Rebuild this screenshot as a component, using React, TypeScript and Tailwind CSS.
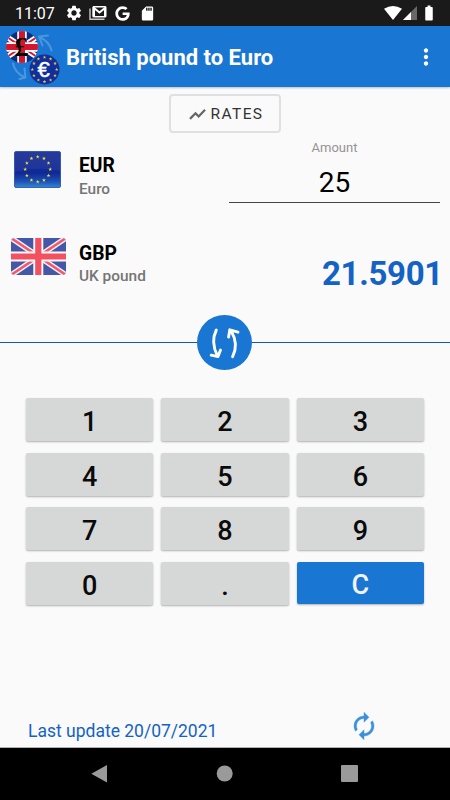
import React, { useState } from 'react';
import { MdSettings, MdSdCard, MdBatteryFull, MdMoreVert } from 'react-icons/md';
import { FaGoogle } from 'react-icons/fa';

const RATE = 0.863604;
const KEYS = ['1', '2', '3', '4', '5', '6', '7', '8', '9', '0', '.', 'C'];

const STAR = '0,-1 0.24,-0.32 0.95,-0.31 0.38,0.12 0.59,0.81 0,0.4 -0.59,0.81 -0.38,0.12 -0.95,-0.31 -0.24,-0.32';

function Stars({ cx, cy, r, size, fill }: { cx: number; cy: number; r: number; size: number; fill: string }) {
  return (
    <g fill={fill}>
      {Array.from({ length: 12 }, (_, i) => {
        const a = (i * Math.PI) / 6;
        return (
          <polygon
            key={i}
            points={STAR}
            transform={`translate(${cx + r * Math.sin(a)} ${cy - r * Math.cos(a)}) scale(${size})`}
          />
        );
      })}
    </g>
  );
}

function AppLogo() {
  return (
    <svg className="h-[60px] w-[62px] shrink-0" viewBox="0 26 62 60">
      <defs>
        <clipPath id="coin">
          <circle cx="22" cy="46" r="16" />
        </clipPath>
      </defs>
      <g clipPath="url(#coin)">
        <rect x="6" y="30" width="32" height="32" fill="#0b2d7c" />
        <path d="M4 34 40 58M4 58 40 34" stroke="#fff" strokeWidth="5.5" />
        <path d="M4 34 40 58M4 58 40 34" stroke="#d4152e" strokeWidth="2" />
        <path d="M22 30v32M6 46h32" stroke="#fff" strokeWidth="9.5" />
        <path d="M22 30v32M6 46h32" stroke="#d4152e" strokeWidth="6" />
      </g>
      <text x="21.5" y="55" textAnchor="middle" className="font-['Liberation_Serif',serif] text-[28px] font-bold">£</text>
      <g fill="none" stroke="#4b97de" strokeWidth="2" strokeLinecap="round" strokeLinejoin="round">
        <path d="M51.500 49.500Q49 40 39.500 36M48 34.500l-9 1 3.500 9" />
        <path d="M13 62.500Q15 72 24.500 76M19.500 78l6-1.500-1-9" />
      </g>
      <circle cx="44.500" cy="68.500" r="15" fill="#0f2f9e" />
      <Stars cx={44.5} cy={68.5} r={12.2} size={1.9} fill="#f5c32c" />
      <text
        x="43.500"
        y="76"
        textAnchor="middle"
        fill="#fff"
        stroke="#fff"
        strokeWidth="0.500"
        className="font-['Liberation_Sans',sans-serif] text-[22px]"
      >
        €
      </text>
    </svg>
  );
}

function EuFlag() {
  return (
    <svg className="h-[37px] w-[47px]" viewBox="0 0 47 37">
      <defs>
        <linearGradient id="eu" x1="0" y1="0" x2="0" y2="1">
          <stop offset="0" stopColor="#16309a" />
          <stop offset="0.12" stopColor="#1b2f95" />
          <stop offset="0.6" stopColor="#102996" />
          <stop offset="0.82" stopColor="#1c4fb2" />
          <stop offset="1" stopColor="#3087d5" />
        </linearGradient>
      </defs>
      <rect x="0.500" y="0.500" width="46" height="36" rx="1.500" fill="url(#eu)" stroke="#27479f" strokeWidth="0.800" />
      <path d="M1 1h45v19Q24 15 1 21z" fill="#fff" fillOpacity="0.050" />
      <Stars cx={23.7} cy={18.3} r={12.5} size={2} fill="#efe63c" />
    </svg>
  );
}

function UkFlag() {
  return (
    <svg className="h-[37px] w-[55px]" viewBox="0 0 55 37">
      <defs>
        <clipPath id="uk">
          <rect width="55" height="37" rx="4" />
        </clipPath>
      </defs>
      <g clipPath="url(#uk)">
        <rect width="55" height="37" fill="#4558a8" />
        <path d="M0 0 55 37M0 37 55 0" stroke="#f0f1f8" strokeWidth="5.500" />
        <path d="M0 0 55 37M0 37 55 0" stroke="#f35968" strokeWidth="2.600" />
        <path d="M27.300 0v37M0 18.500h55" stroke="#fafafa" strokeWidth="10" />
        <path d="M27.300 0v37M0 18.500h55" stroke="#f35060" strokeWidth="6.200" />
      </g>
    </svg>
  );
}

function StatusBar() {
  return (
    <div className="flex h-[26px] items-center bg-[#1a1a1a] pl-[15px] pr-[12px] text-white">
      <span className="w-[50px] pt-[2px] text-[16px] leading-none">11:07</span>
      <MdSettings className="size-[18px]" />
      <svg className="ml-[6px] h-[14px] w-[18px]" viewBox="0 0 18 14">
        <path d="M1 2.500v10.700h14.500" fill="none" stroke="#c9c9c9" strokeWidth="1.400" />
        <rect x="4" y="0.800" width="12.800" height="10" rx="0.800" fill="none" stroke="#fff" strokeWidth="1.400" />
        <path d="M5 10.500V2l5.500 4.500L16 2v8.500" fill="none" stroke="#fff" strokeWidth="2" />
      </svg>
      <FaGoogle className="ml-[8px] h-[15px] w-[15px]" />
      <MdSdCard className="ml-[9px] size-[17px]" />
      <svg className="ml-auto h-[14px] w-[18px]" viewBox="0 0 18 14">
        <path d="M0 2.800Q9-2.800 18 2.800L9 14z" fill="#fff" />
      </svg>
      <svg className="ml-[1px] h-[14px] w-[14px]" viewBox="0 0 14 14">
        <path d="M14 0v14H0z" fill="#686868" />
        <path d="M8 6v8H0z" fill="#fff" />
      </svg>
      <MdBatteryFull className="ml-[3px] size-[18px]" />
    </div>
  );
}

export default function App() {
  const [amount, setAmount] = useState('25');

  const handleKey = (key: string) => {
    if (key === 'C') {
      setAmount('');
    } else if (key !== '.' || !amount.includes('.')) {
      setAmount(prev => prev + key);
    }
  };

  const result = (Number(amount || 0) * RATE).toFixed(4);

  return (
    <div className="flex h-[800px] w-[450px] flex-col overflow-hidden bg-[#fafafa] font-[Roboto,sans-serif]">
      <StatusBar />

      {/* App bar */}
      <header className="flex h-[61px] shrink-0 items-center bg-[#1976d2] text-white shadow-[0_1px_2px_rgba(0,0,0,0.25)]">
        <AppLogo />
        <h1 className="ml-[4px] mt-[2px] whitespace-nowrap text-[22px] font-bold leading-none">British pound to Euro</h1>
        <button className="ml-auto mr-[11px]">
          <MdMoreVert className="size-[26px]" />
        </button>
      </header>

      <div className="flex h-[46px] justify-center pt-[7px]">
        <button className="flex h-[39px] w-[112px] items-center justify-center gap-[4px] rounded-[4px] border-2 border-[#e0e0e0] pl-[1px] pt-[2px] text-[15.500px] tracking-[1.400px] text-[#333]">
          <svg className="size-[19px]" viewBox="0 0 24 24" fill="none" stroke="#666" strokeWidth="2.800">
            <path d="M2.500 17.500l7-7 4 4 8-8.500" />
          </svg>
          RATES
        </button>
      </div>

      {/* Source currency */}
      <div className="flex h-[89px] pl-[14px] pr-[10px]">
        <div className="mt-[18px] w-[65px]">
          <EuFlag />
        </div>
        <div className="mt-[23px]">
          <p className="text-[19.300px] font-bold leading-[20px] text-black">EUR</p>
          <p className="mt-[4px] text-[15.400px] font-medium leading-[18px] text-[#757575]">Euro</p>
        </div>
        <div className="ml-auto flex h-[70px] w-[211px] flex-col items-center border-b border-[#444] pt-[6px]">
          <label className="text-[13px] leading-[18px] text-[#949494]">Amount</label>
          <span className="mt-[10px] text-[28px] leading-[32px] text-black">{amount}</span>
        </div>
      </div>

      {/* Target currency */}
      <div className="flex h-[93px] pl-[11px] pr-[7px]">
        <div className="mt-[16px] w-[68px]">
          <UkFlag />
        </div>
        <div className="mt-[22px]">
          <p className="text-[19.300px] font-bold leading-[20px] text-black">GBP</p>
          <p className="mt-[3px] text-[15.400px] font-medium leading-[18px] text-[#757575]">UK pound</p>
        </div>
        <p className="ml-auto mt-[32px] text-[33px] font-bold leading-[40px] tracking-[-0.300px] text-[#1463c4]">{result}</p>
      </div>

      {/* Swap */}
      <div className="flex h-[55px] items-center">
        <div className="h-px w-[197px] bg-[#1259b5]" />
        <button className="size-[55px] rounded-full bg-[#1976d2]">
          <svg viewBox="0 0 55 55" fill="none" stroke="#fff" strokeWidth="2.900" strokeLinecap="round" strokeLinejoin="round">
            <path d="M19.300 15Q13.500 27 20.300 40.500M14.200 40.200l6.800 1.400 2.500-6.600" />
            <path d="M35.600 41.700Q42 29 34 15.800M31.600 22l1.200-7.200 8.200 2.400" />
          </svg>
        </button>
        <div className="h-px flex-1 bg-[#1259b5]" />
      </div>

      <div className="mt-[28px] grid auto-rows-[43px] grid-cols-3 gap-x-[8px] gap-y-[11.500px] px-[26px]">
        {KEYS.map((key) => (
          <button
            key={key}
            onClick={() => handleKey(key)}
            className={`flex items-center justify-center rounded-[2px] pt-[6px] text-[27px] font-medium leading-none shadow-[0_1px_2px_rgba(0,0,0,0.3)] ${
              key === 'C' ? 'h-[42px] bg-[#1976d2] text-[#f2f2f2]' : 'bg-[#d6d7d7] text-[#0a0a0a]'
            }`}
          >
            {key}
          </button>
        ))}
      </div>

      <div className="mt-auto flex h-[36px] items-start justify-between pl-[28px] pr-[71px]">
        <p className="mt-[10px] text-[17.500px] leading-[20px] text-[#1463c4]">Last update 20/07/2021</p>
        <button>
          <svg className="size-[30px]" viewBox="0 0 24 24" fill="#3b8fdd" stroke="#3b8fdd" strokeWidth="0.300">
            <path d="M12 6v3l4-4-4-4v3c-4.420 0-8 3.580-8 8 0 1.570.46 3.030 1.240 4.260L6.700 14.800A5.870 5.870 0 0 1 6 12c0-3.310 2.690-6 6-6z" />
            <path d="M18.760 7.740 17.300 9.200c.44.84.7 1.790.7 2.800 0 3.310-2.690 6-6 6v-3l-4 4 4 4v-3c4.420 0 8-3.580 8-8 0-1.570-.46-3.030-1.240-4.260z" />
          </svg>
        </button>
      </div>

      {/* Navigation bar */}
      <nav className="h-[53px] shrink-0 border-t border-[#b0b0b0] bg-black">
        <svg className="h-[52px] w-[450px]" viewBox="0 0 450 52" fill="#9a9a9a">
          <path d="M107 17v17.500L91.300 25.700z" />
          <circle cx="224.700" cy="25.500" r="8" />
          <rect x="341" y="17" width="17" height="17" rx="1" />
        </svg>
      </nav>
    </div>
  );
}
